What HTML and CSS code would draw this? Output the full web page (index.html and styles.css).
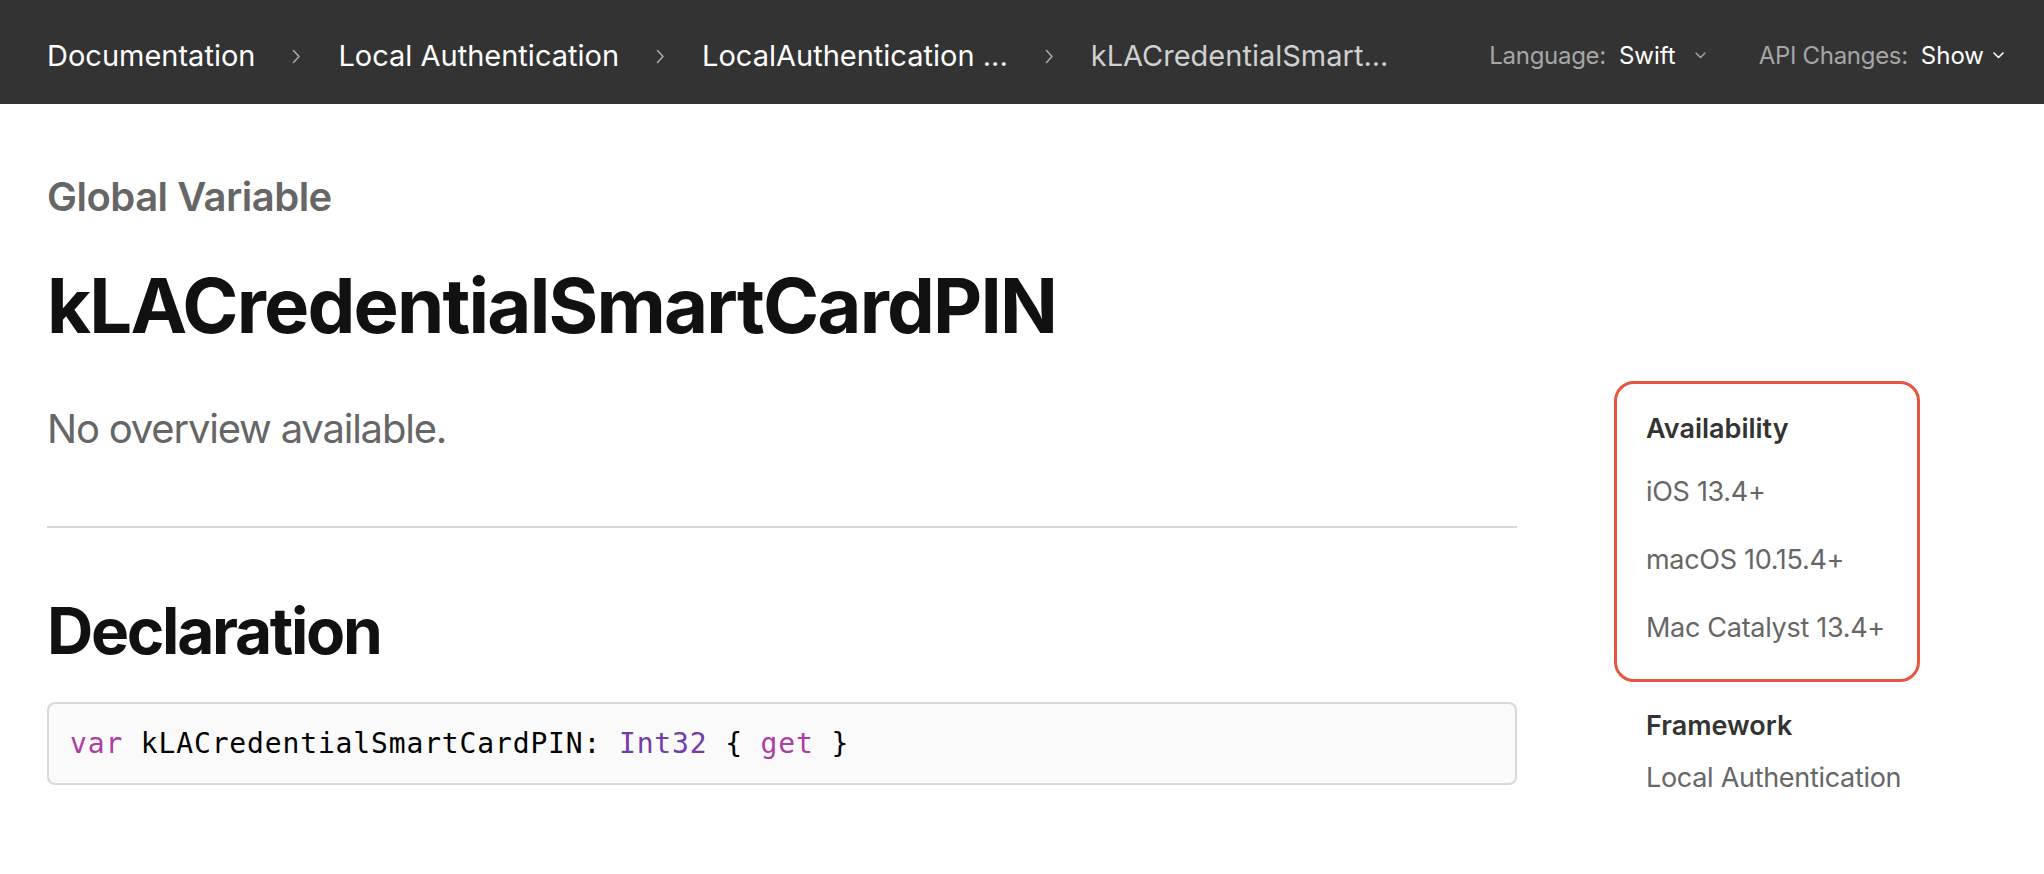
FILE: index.html
```html
<!DOCTYPE html>
<html lang="en">
<head>
<meta charset="utf-8">
<title>kLACredentialSmartCardPIN</title>
<link rel="stylesheet" href="styles.css">
</head>
<body>
<nav class="nav">
  <ol class="crumbs">
    <li class="crumb">Documentation</li>
    <li class="sep"><svg width="9" height="15" viewBox="0 0 9 15"><path d="M1.5 1.5 L7 7.5 L1.5 13.5" fill="none" stroke="#a8a8a8" stroke-width="1.6" stroke-linecap="round" stroke-linejoin="round"/></svg></li>
    <li class="crumb">Local Authentication</li>
    <li class="sep"><svg width="9" height="15" viewBox="0 0 9 15"><path d="M1.5 1.5 L7 7.5 L1.5 13.5" fill="none" stroke="#a8a8a8" stroke-width="1.6" stroke-linecap="round" stroke-linejoin="round"/></svg></li>
    <li class="crumb">LocalAuthentication ...</li>
    <li class="sep"><svg width="9" height="15" viewBox="0 0 9 15"><path d="M1.5 1.5 L7 7.5 L1.5 13.5" fill="none" stroke="#a8a8a8" stroke-width="1.6" stroke-linecap="round" stroke-linejoin="round"/></svg></li>
    <li class="crumb current">kLACredentialSmart...</li>
  </ol>
  <div class="controls">
    <div class="control lang">
      <span class="label">Language:</span>
      <span class="value">Swift</span>
      <svg class="caret caret-gray" width="11" height="7" viewBox="0 0 11 7"><path d="M1 1 L5.5 5.5 L10 1" fill="none" stroke="#a0a0a0" stroke-width="1.5" stroke-linecap="round" stroke-linejoin="round"/></svg>
    </div>
    <div class="control api">
      <span class="label">API Changes:</span>
      <span class="value">Show</span>
      <svg class="caret caret-white" width="11" height="7" viewBox="0 0 11 7"><path d="M1 1 L5.5 5.5 L10 1" fill="none" stroke="#ffffff" stroke-width="1.6" stroke-linecap="round" stroke-linejoin="round"/></svg>
    </div>
  </div>
</nav>

<main class="page">
  <header class="topic">
    <div class="eyebrow">Global Variable</div>
    <h1 class="title">kLACredentialSmartCardPIN</h1>
  </header>
  <div class="layout">
    <div class="content">
      <p class="abstract">No overview available.</p>
      <hr class="rule">
      <h2 class="section-title">Declaration</h2>
      <div class="code"><span class="kw">var</span> kLACredentialSmartCardPIN: <span class="type">Int32</span> { <span class="kw">get</span> }</div>
    </div>
    <aside class="summary">
      <div class="availability">
        <div class="summary-title">Availability</div>
        <div class="platform">iOS 13.4+</div>
        <div class="platform">macOS 10.15.4+</div>
        <div class="platform">Mac Catalyst 13.4+</div>
      </div>
      <div class="framework">
        <div class="summary-title">Framework</div>
        <div class="framework-name">Local Authentication</div>
      </div>
    </aside>
  </div>
</main>
</body>
</html>
```

FILE: styles.css
```css
* { box-sizing: border-box; }

html, body {
  margin: 0;
  padding: 0;
  background: #ffffff;
  font-family: "Inter", "Liberation Sans", sans-serif;
}

.nav {
  height: 104px;
  background: #333333;
  display: flex;
  align-items: center;
  padding: 6px 40px 0 47px;
}

.crumbs {
  list-style: none;
  margin: 0;
  padding: 0;
  display: flex;
  align-items: center;
}

.crumb {
  font-size: 29px;
  color: #ffffff;
  white-space: nowrap;
}

.crumb.current {
  color: #d0d0d0;
}

.sep {
  display: flex;
  align-items: center;
  margin: 0 37px 0 37px;
  padding-top: 2px;
}

.controls {
  margin-left: auto;
  display: flex;
  align-items: center;
}

.control {
  display: flex;
  align-items: center;
  font-size: 24px;
  white-space: nowrap;
}

.control .label {
  color: #a6a6a6;
  margin-right: 13px;
  letter-spacing: -0.3px;
}

.control .value {
  color: #ffffff;
}

.lang .caret {
  margin-left: 19px;
  margin-right: 53px;
}

.api .caret {
  margin-left: 9px;
}

.page {
  padding: 69px 124px 0 47px;
}

.eyebrow {
  font-size: 40px;
  line-height: 48px;
  font-weight: 600;
  color: #666666;
  letter-spacing: -0.5px;
}

.title {
  margin: 39px 0 0 0;
  font-size: 76px;
  line-height: 90px;
  font-weight: 700;
  color: #111111;
  letter-spacing: -1.8px;
}

.layout {
  display: grid;
  grid-template-columns: 1470px 306px;
  column-gap: 97px;
  margin-top: 31px;
}

.abstract {
  margin: 20px 0 0 0;
  font-size: 40px;
  line-height: 56px;
  color: #666666;
  letter-spacing: -1.2px;
}

.rule {
  margin: 69px 0 0 0;
  border: 0;
  height: 2px;
  background: #d6d6d6;
}

.section-title {
  margin: 64px 0 0 0;
  font-size: 64px;
  line-height: 78px;
  font-weight: 700;
  color: #111111;
  letter-spacing: -2.3px;
}

.code {
  margin-top: 32px;
  height: 83px;
  border: 2px solid #d8d8d8;
  border-radius: 8px;
  background: #fafafa;
  padding: 0 21px;
  font-family: "DejaVu Sans Mono", "Liberation Mono", monospace;
  font-size: 28px;
  letter-spacing: 0.85px;
  line-height: 79px;
  color: #000000;
  white-space: pre;
}

.kw { color: #ad3da4; }
.type { color: #703daa; }

.availability {
  border: 3px solid #e5553f;
  border-radius: 20px;
  padding: 27px 20px 17px 29px;
}

.summary-title {
  font-size: 27px;
  line-height: 36px;
  font-weight: 600;
  color: #333333;
  white-space: nowrap;
}

.availability .summary-title {
  margin-bottom: 11px;
}

.platform {
  font-size: 27px;
  line-height: 68px;
  color: #666666;
  white-space: nowrap;
  letter-spacing: -0.3px;
}

.framework {
  margin-top: 26px;
  padding-left: 32px;
}

.framework-name {
  margin-top: 16px;
  font-size: 27px;
  line-height: 36px;
  color: #666666;
  white-space: nowrap;
  letter-spacing: -0.3px;
}
```
